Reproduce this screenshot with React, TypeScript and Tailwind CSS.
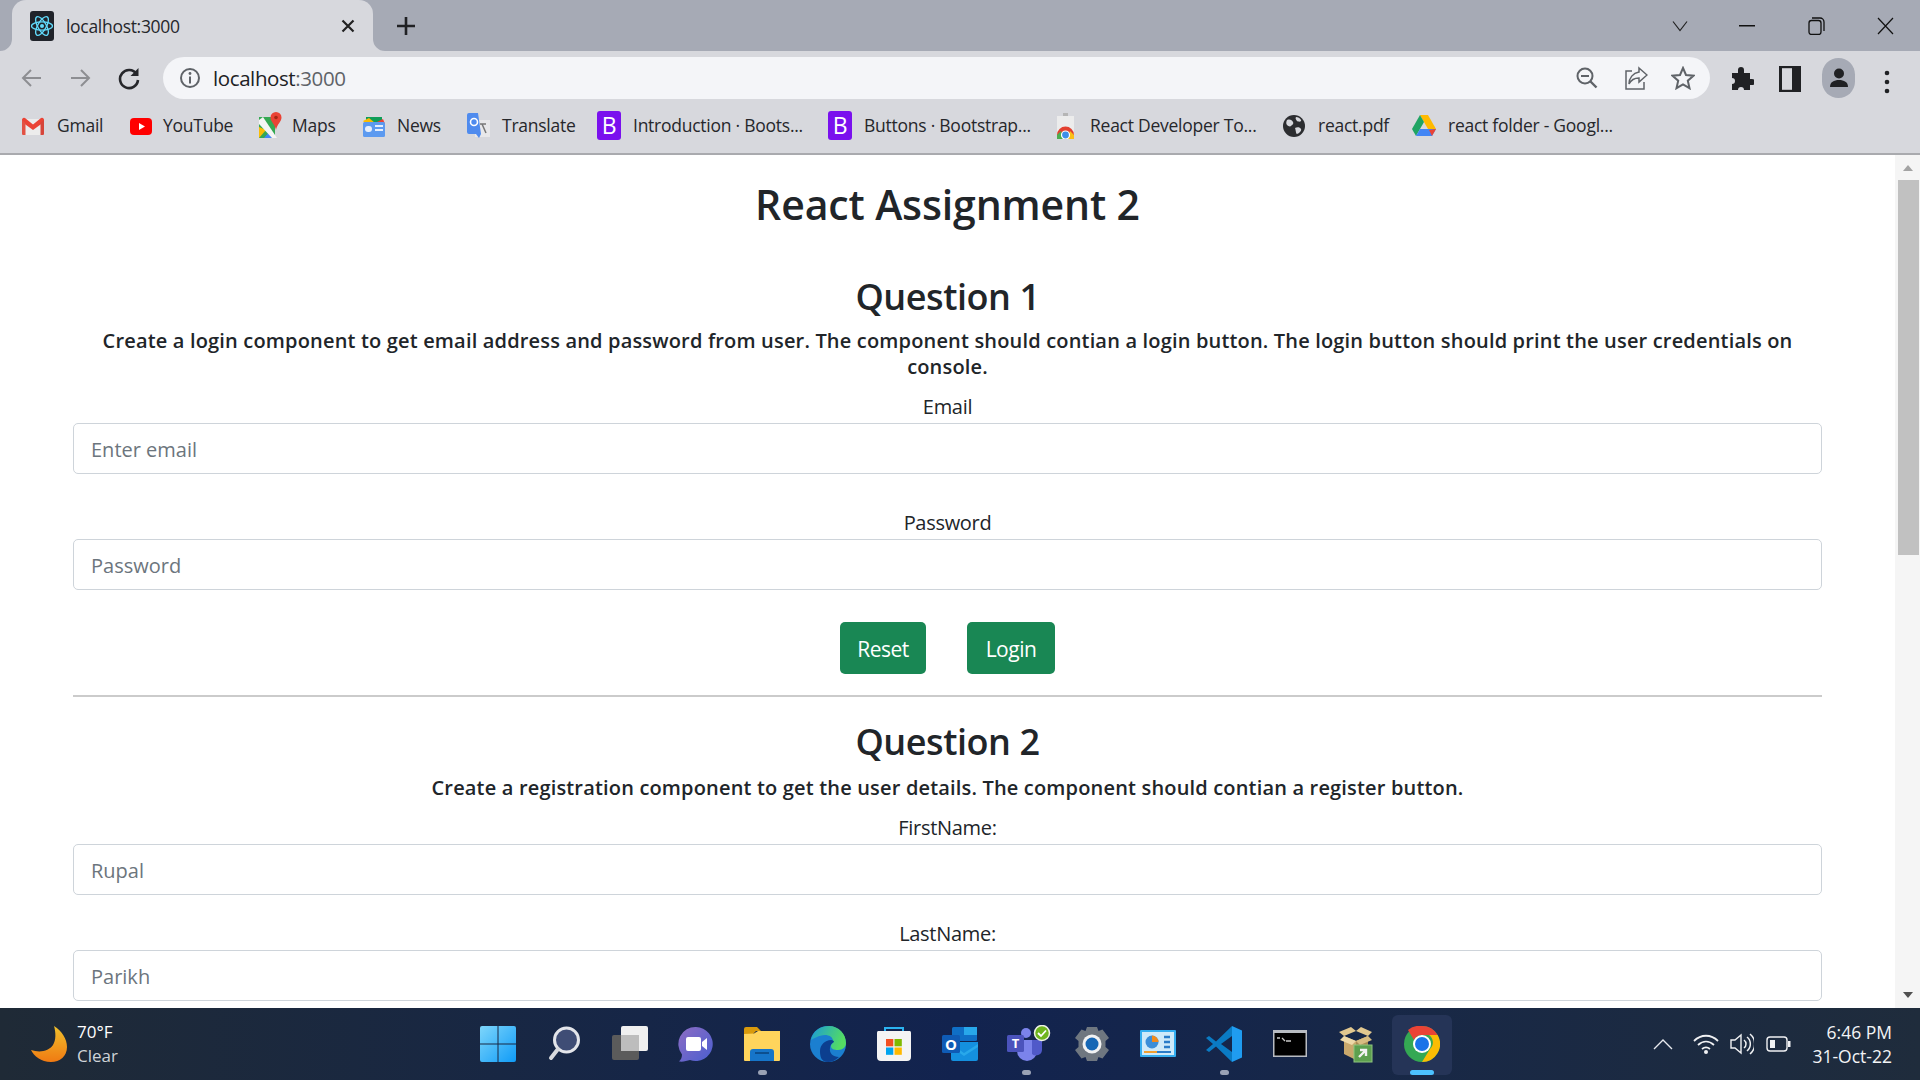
import React from "react";

const FONT = "font-['Open_Sans','Noto_Sans',sans-serif]";

function ReactIcon() {
  return (
    <svg width="24" height="30" viewBox="0 0 24 30">
      <rect width="24" height="30" rx="3" fill="#20232a" y="0" />
      <g fill="none" stroke="#61dafb" strokeWidth="1.3">
        <ellipse cx="12" cy="15" rx="10.5" ry="4.2" />
        <ellipse cx="12" cy="15" rx="10.5" ry="4.2" transform="rotate(60 12 15)" />
        <ellipse cx="12" cy="15" rx="10.5" ry="4.2" transform="rotate(120 12 15)" />
      </g>
      <circle cx="12" cy="15" r="2" fill="#61dafb" />
    </svg>
  );
}

function Gmail() {
  return (
    <svg width="24" height="24" viewBox="0 0 24 24">
      <path d="M1 5h22v15a1 1 0 0 1-1 1H2a1 1 0 0 1-1-1z" fill="#ececec" />
      <path d="M1 5.500A2 2 0 0 1 4 4l8 6.500L20 4a2 2 0 0 1 3 1.500V8l-11 8L1 8z" fill="#ea4335" />
      <path d="M1 6v14a1 1 0 0 0 1 1h2.500V9z" fill="#e25244" />
      <path d="M23 6v14a1 1 0 0 1-1 1h-2.500V9z" fill="#d6453a" />
    </svg>
  );
}

function YouTube() {
  return (
    <svg width="24" height="24" viewBox="0 0 24 24">
      <rect x="1" y="4" width="22" height="17" rx="4" fill="#f00" />
      <path d="M10 9l6 3.500-6 3.500z" fill="#fff" />
    </svg>
  );
}

function Maps() {
  return (
    <svg width="24" height="28" viewBox="0 0 24 28">
      <path d="M1 5h16v21H1z" fill="#35a853" />
      <path d="M1 15l7 3-7 8z" fill="#fbbc04" />
      <path d="M6 26l6-7 6 7z" fill="#4285f4" />
      <path d="M1 8l4-3 14 21h-5L1 12z" fill="#f5f5f5" />
      <path d="M18 0a5.500 5.500 0 0 1 5.500 5.500C23.500 10 19 12 18 18c-1-6-5.500-8-5.500-12.500A5.500 5.500 0 0 1 18 0z" fill="#ea4335" />
      <circle cx="18" cy="5.500" r="1.800" fill="#a52714" />
    </svg>
  );
}

function News() {
  return (
    <svg width="24" height="24" viewBox="0 0 24 24">
      <path d="M4 3h16v6H4z" fill="#0f9d58" />
      <path d="M1 7l6-3 6 5H3z" fill="#fbbc04" />
      <path d="M13 9l8-4 2 5z" fill="#ea4335" />
      <rect x="1" y="8" width="22" height="15" rx="1.500" fill="#5c9af0" />
      <rect x="3" y="12" width="7" height="6" rx="3" fill="#e6effc" />
      <rect x="13" y="11" width="8" height="2" fill="#e6effc" />
      <rect x="13" y="15" width="8" height="2" fill="#e6effc" />
    </svg>
  );
}

function Translate() {
  return (
    <svg width="24" height="28" viewBox="0 0 24 28">
      <rect x="8" y="8" width="15" height="17" fill="#e8e8ea" />
      <path d="M15 12l4 9M19 12h-6" stroke="#777" strokeWidth="1.500" fill="none" />
      <path d="M2 1h9l3 21 -2 4-3-4H2a2 2 0 0 1-2-2V3a2 2 0 0 1 2-2z" fill="#4f8bee" />
      <circle cx="7" cy="10" r="3.500" fill="none" stroke="#fff" strokeWidth="1.600" />
    </svg>
  );
}

function Boot() {
  return (
    <div className="w-6 h-[29px] bg-[#7a10ee] rounded-[3px] text-white text-[23px] leading-[29px] text-center font-medium">
      B
    </div>
  );
}

function Devtools() {
  return (
    <svg width="19" height="26" viewBox="0 0 19 26">
      <rect x="7" y="0" width="5" height="3" fill="#b5b5b5" />
      <rect x="1" y="3" width="17" height="20" fill="#ececec" />
      <path d="M1 22a8.500 8.500 0 0 1 17 0z" fill="#e3402f" />
      <path d="M1 22v4h7l-3-8z" fill="#4cae50" />
      <path d="M18 22v4h-7l3-8z" fill="#fbc016" />
      <circle cx="9.500" cy="22" r="4" fill="#3d8fe9" stroke="#fff" strokeWidth="1.200" />
    </svg>
  );
}

function Globe() {
  return (
    <svg width="22" height="22" viewBox="0 0 22 22">
      <circle cx="11" cy="11" r="11" fill="#2c2d30" />
      <path d="M4 5c3-1 5 0 6 2s-1 3-2 4-3 0-4-1-1-3 0-5zM12 13c2-1 5-1 6 1s-3 5-4 5-1-3-2-6zM13 2c2 0 4 1 5 3s-3 2-4 1-2-3-1-4z" fill="#d7d8dd" />
    </svg>
  );
}

function Drive() {
  return (
    <svg width="24" height="24" viewBox="0 0 24 24">
      <path d="M8 1h8l8 14h-8z" fill="#ffba00" />
      <path d="M8 1L0 15l4 7 8-14z" fill="#1fa463" />
      <path d="M8 15h16l-4 7H4z" fill="#4285f4" />
      <path d="M24 15l-4 7-3-6z" fill="#ea4335" />
    </svg>
  );
}

const bookmarks = [
  { icon: <Gmail />, t: "Gmail", w: "w-[46px]", ml: "ml-[21px]", iw: "w-6", g: "mr-3" },
  { icon: <YouTube />, t: "YouTube", w: "w-[69px]", ml: "ml-[26px]", iw: "w-6", g: "mr-[10px]" },
  { icon: <Maps />, t: "Maps", w: "w-[44px]", ml: "ml-[26px]", iw: "w-6", g: "mr-[10px]" },
  { icon: <News />, t: "News", w: "w-[44px]", ml: "ml-[26px]", iw: "w-6", g: "mr-[11px]" },
  { icon: <Translate />, t: "Translate", w: "w-[71px]", ml: "ml-[26px]", iw: "w-6", g: "mr-[11px]" },
  { icon: <Boot />, t: "Introduction · Boots...", w: "w-[170px]", ml: "ml-[24px]", iw: "w-6", g: "mr-3" },
  { icon: <Boot />, t: "Buttons · Bootstrap...", w: "w-[166px]", ml: "ml-[25px]", iw: "w-6", g: "mr-3" },
  { icon: <Devtools />, t: "React Developer To...", w: "w-[166px]", ml: "ml-[26px]", iw: "w-[19px]", g: "mr-[15px]" },
  { icon: <Globe />, t: "react.pdf", w: "w-[70px]", ml: "ml-[27px]", iw: "w-[22px]", g: "mr-[13px]" },
  { icon: <Drive />, t: "react folder - Googl...", w: "w-[170px]", ml: "ml-[24px]", iw: "w-6", g: "mr-3" },
];

function TopBar() {
  return (
    <div className={`${FONT} shrink-0`}>
      <div className="h-[62px] bg-[#a6aab5] flex relative">
        <div className="ml-3 mt-0 w-[361px] h-[62px] bg-[#d7d8dd] rounded-t-[14px] flex items-start pl-[18px] pt-[11px]">
          <ReactIcon />
          <span className="ml-[12px] text-[17.500px] leading-[30px] tracking-[-0.3px] text-[#26272b]">localhost:3000</span>
          <svg className="ml-[161px] mt-[8px]" width="14" height="14" viewBox="0 0 14 14">
            <path d="M1.500 1.500l11 11M12.500 1.500l-11 11" stroke="#222" strokeWidth="2.200" />
          </svg>
        </div>
        <svg className="absolute left-0 top-[39px]" width="12" height="12" viewBox="0 0 12 12">
          <path d="M12 0v12H0a12 12 0 0 0 12-12z" fill="#d7d8dd" />
        </svg>
        <svg className="absolute left-[373px] top-[39px]" width="12" height="12" viewBox="0 0 12 12">
          <path d="M0 0v12h12A12 12 0 0 1 0 0z" fill="#d7d8dd" />
        </svg>
        <svg className="ml-[23px] mt-[16px]" width="20" height="20" viewBox="0 0 20 20">
          <path d="M10 1v18M1 10h18" stroke="#202124" strokeWidth="2.600" />
        </svg>
        <div className="absolute right-0 top-0 h-[51px] flex items-start">
          <svg className="mt-[20px] mr-[50px]" width="18" height="12" viewBox="0 0 18 12">
            <path d="M2 1.500l7 9 7-9" stroke="#222" strokeWidth="1.200" fill="none" />
          </svg>
          <svg className="mt-[25px] mr-[53px]" width="16" height="2" viewBox="0 0 16 2">
            <rect width="16" height="1.500" fill="#111" />
          </svg>
          <svg className="mt-[17px] mr-[52px]" width="17" height="18" viewBox="0 0 17 18">
            <rect x="1" y="3.500" width="12" height="14" rx="2.500" fill="none" stroke="#111" strokeWidth="1.300" />
            <path d="M4 1h8a4 4 0 0 1 4 4v9" fill="none" stroke="#111" strokeWidth="1.300" />
          </svg>
          <svg className="mt-[17px] mr-[26px]" width="17" height="18" viewBox="0 0 17 18">
            <path d="M1 1l15 16M16 1L1 17" stroke="#111" strokeWidth="1.200" />
          </svg>
        </div>
      </div>
      <div className="h-[104px] -mt-[11px] relative bg-[#d7d8dd] border-b-2 border-[#a9aaae]">
        <div className="h-[49px] flex items-start pt-[6px]">
          <svg className="ml-[21px] mt-[10px]" width="22" height="22" viewBox="0 0 22 22">
            <path d="M20 11H3M10 3l-8 8 8 8" stroke="#8d8e92" strokeWidth="2" fill="none" />
          </svg>
          <svg className="ml-[26px] mt-[10px]" width="22" height="22" viewBox="0 0 22 22">
            <path d="M2 11h17M12 3l8 8-8 8" stroke="#8d8e92" strokeWidth="2" fill="none" />
          </svg>
          <svg className="ml-[26px] mt-[9px]" width="24" height="24" viewBox="0 0 24 24">
            <path d="M19.500 8A9 9 0 1 0 21 14" stroke="#26272b" strokeWidth="2.600" fill="none" />
            <path d="M21.500 2v8h-8z" fill="#26272b" />
          </svg>
          <div className="ml-[22px] w-[1547px] h-[42px] bg-[#f4f5f8] rounded-full flex items-center">
            <svg className="ml-[16px]" width="22" height="22" viewBox="0 0 22 22">
              <circle cx="11" cy="11" r="9" stroke="#5f6368" strokeWidth="2" fill="none" />
              <circle cx="11" cy="6.500" r="1.400" fill="#5f6368" />
              <rect x="10" y="9.500" width="2" height="7" fill="#5f6368" />
            </svg>
            <span className="ml-[12px] text-[20.500px] tracking-[-0.4px] text-[#202124]">
              localhost<span className="text-[#5f6368]">:3000</span>
            </span>
            <div className="ml-auto flex items-center">
              <svg width="22" height="24" viewBox="0 0 22 24">
                <circle cx="9" cy="10" r="7.500" stroke="#5f6368" strokeWidth="2" fill="none" />
                <path d="M14.500 15.500l6 6" stroke="#5f6368" strokeWidth="2.400" />
                <path d="M5 10h8" stroke="#5f6368" strokeWidth="2" />
              </svg>
              <svg className="ml-[26px]" width="24" height="24" viewBox="0 0 24 24">
                <path d="M8 5H2v18h18v-7" stroke="#5f6368" strokeWidth="1.500" fill="none" />
                <path d="M15 2l8 7-8 7v-4c-5 0-8 2-10 6 0-6 4-11 10-12z" stroke="#5f6368" strokeWidth="1.500" fill="#f4f5f8" />
              </svg>
              <svg className="ml-[23px] mr-[15px]" width="24" height="24" viewBox="0 0 24 24">
                <path d="M12 2l3 7 7.500.700-5.700 5 1.700 7.500L12 18.300l-6.500 3.900 1.700-7.500-5.700-5L9 9z" stroke="#5f6368" strokeWidth="2" fill="none" />
              </svg>
            </div>
          </div>
          <svg className="ml-[20px] mt-[8px]" width="24" height="26" viewBox="0 0 24 26">
            <path d="M2 8h6V5a3 3 0 0 1 6 0v3h6v6h2a3 3 0 0 1 0 6h-2v5h-6a3 3 0 0 0-6 0H2v-6a3 3 0 0 0 0-6z" fill="#202124" />
          </svg>
          <svg className="ml-[25px] mt-[9px]" width="22" height="26" viewBox="0 0 22 26">
            <rect x="1" y="1" width="20" height="24" fill="none" stroke="#202124" strokeWidth="2.400" />
            <rect x="13" y="1" width="8" height="24" fill="#202124" />
            <rect x="1" y="1" width="2" height="24" fill="#202124" />
          </svg>
          <div className="ml-[21px] mt-[1px] w-[33px] h-[40px] rounded-full bg-[#a6aab5] flex items-center justify-center">
            <svg width="22" height="22" viewBox="0 0 22 22">
              <circle cx="11" cy="6.500" r="5" fill="#202124" />
              <path d="M2 20c0-5 4-7 9-7s9 2 9 7z" fill="#202124" />
            </svg>
          </div>
          <svg className="ml-[29px] mt-[13px]" width="6" height="24" viewBox="0 0 6 24">
            <circle cx="3" cy="3" r="2.300" fill="#202124" />
            <circle cx="3" cy="12" r="2.300" fill="#202124" />
            <circle cx="3" cy="21" r="2.300" fill="#202124" />
          </svg>
        </div>
        <div className="h-[51px] flex items-center text-[17.500px] tracking-[-0.25px] text-[#26272b] whitespace-nowrap">
          {bookmarks.map((b) => (
            <div key={b.t} className={`flex items-center ${b.ml}`}>
              <div className={`${b.iw} ${b.g} flex justify-center shrink-0`}>{b.icon}</div>
              <span className={b.w}>{b.t}</span>
            </div>
          ))}
        </div>
      </div>
    </div>
  );
}

function Field({ label, ph, im }: { label: string; ph: string; im: string }) {
  return (
    <div className={im}>
      <label className="block mb-[1px] text-center text-[20px] leading-[30px] tracking-[-0.3px]">{label}</label>
      <input
        placeholder={ph}
        className="block w-full h-[51px] px-[17px] pt-[1px] border border-[#ced4da] rounded-[5px] text-[20px] bg-white placeholder:text-[#6c757d] outline-none"
      />
    </div>
  );
}

function Page() {
  return (
    <div className={`${FONT} flex-1 min-h-0 flex overflow-hidden bg-white text-[#212529]`}>
      <div className="flex-1 min-w-0 px-[73px] pt-[24px]">
        <h1 className="text-center text-[41px] leading-[50px] font-semibold tracking-[-0.13px]">React Assignment 2</h1>
        <h2 className="mt-[46px] text-center text-[36px] leading-[44px] font-semibold tracking-[-0.45px]">Question 1</h2>
        <p className="mt-[9px] text-center text-[20px] leading-[26px] font-semibold tracking-[0.17px] px-[10px]">
          Create a login component to get email address and password from user. The component should contian a login button. The login button should print the user credentials on console.
        </p>
        <Field label="Email" ph="Enter email" im="mt-[12px]" />
        <Field label="Password" ph="Password" im="mt-[34px]" />
        <div className="mt-[32px] flex justify-center gap-[41px]">
          <button className="w-[86px] h-[52px] pt-[3px] bg-[#198754] text-white text-[21px] tracking-[-0.5px] rounded-[5px]">Reset</button>
          <button className="w-[88px] h-[52px] pt-[3px] bg-[#198754] text-white text-[21px] tracking-[-0.5px] rounded-[5px]">Login</button>
        </div>
        <div className="mt-[21px] h-[2px] bg-[#cbcbcb]" />
        <h2 className="mt-[23px] text-center text-[36px] leading-[44px] font-semibold tracking-[-0.45px]">Question 2</h2>
        <p className="mt-[11px] text-center text-[20px] leading-[26px] font-semibold tracking-[0.17px]">
          Create a registration component to get the user details. The component should contian a register button.
        </p>
        <Field label="FirstName:" ph="Rupal" im="mt-[12px]" />
        <Field label="LastName:" ph="Parikh" im="mt-[24px]" />
      </div>
      <div className="w-[25px] shrink-0 bg-[#f5f5f5] flex flex-col items-center">
        <svg className="mt-[9px]" width="12" height="8" viewBox="0 0 12 8"><path d="M6 1l5 6H1z" fill="#a3a3a3" /></svg>
        <div className="mt-[8px] ml-[1px] w-[21px] h-[375px] bg-[#c1c1c1]" />
        <svg className="mt-auto mb-[9px]" width="12" height="8" viewBox="0 0 12 8"><path d="M6 7l5-6H1z" fill="#505050" /></svg>
      </div>
    </div>
  );
}

const Start = () => (
  <svg width="36" height="36" viewBox="0 0 36 36">
    <defs>
      <linearGradient id="st" x1="0" y1="0" x2="1" y2="1">
        <stop offset="0" stopColor="#7ed6fb" />
        <stop offset="1" stopColor="#0f9bf7" />
      </linearGradient>
    </defs>
    <path d="M2 0h15.500v17.500H0V2a2 2 0 0 1 2-2zM18.500 0H34a2 2 0 0 1 2 2v15.500H18.500zM0 18.500h17.500V36H2a2 2 0 0 1-2-2zM18.500 18.500H36V34a2 2 0 0 1-2 2H18.500z" fill="url(#st)" />
  </svg>
);
const Search = () => (
  <svg width="36" height="36" viewBox="0 0 36 36">
    <circle cx="20.500" cy="14" r="12" fill="#3f4d75" stroke="#e3e5ea" strokeWidth="3" />
    <path d="M12 23l-7 9" stroke="#d8dade" strokeWidth="4" strokeLinecap="round" />
  </svg>
);
const TaskView = () => (
  <svg width="36" height="36" viewBox="0 0 36 36">
    <rect x="0" y="9" width="27" height="25" rx="2" fill="#5b5b5b" />
    <rect x="9" y="0" width="27" height="25" rx="2" fill="#f0f0f0" />
    <rect x="9" y="9" width="18" height="16" fill="#bdbdbd" />
  </svg>
);
const Chat = () => (
  <svg width="36" height="36" viewBox="0 0 36 36">
    <defs>
      <linearGradient id="ch" x1="0" y1="0" x2="1" y2="1">
        <stop offset="0" stopColor="#8d6cc4" />
        <stop offset="1" stopColor="#4a5fd0" />
      </linearGradient>
    </defs>
    <path d="M18 1a17 17 0 1 1-6 33c-3 1-7 2-11 1.500 2-2 3-4 3-7A17 17 0 0 1 18 1z" fill="url(#ch)" />
    <rect x="8" y="11" width="15" height="14" rx="2" fill="#fff" />
    <path d="M24 16l5-4v12l-5-4z" fill="#fff" />
  </svg>
);
const Explorer = () => (
  <svg width="36" height="36" viewBox="0 0 36 36">
    <path d="M0 3a2 2 0 0 1 2-2h11l4 4h-5l-3 3H0z" fill="#d99a0c" />
    <path d="M0 8l10-.5L14 5h22v29a1 1 0 0 1-1 1H1a1 1 0 0 1-1-1z" fill="#ffd45c" />
    <path d="M6 35V26a3 3 0 0 1 3-3h18a3 3 0 0 1 3 3v9z" fill="#1675c9" />
    <rect x="11" y="26" width="14" height="2" fill="#0c4f8f" />
  </svg>
);
const Edge = () => (
  <svg width="36" height="36" viewBox="0 0 36 36">
    <defs>
      <linearGradient id="ed" x1="0" y1="0" x2="1" y2="0.300">
        <stop offset="0" stopColor="#1a9ad8" />
        <stop offset="1" stopColor="#54dd62" />
      </linearGradient>
    </defs>
    <circle cx="18" cy="18" r="18" fill="#1b7fd0" />
    <path d="M1 14C3 5 10 0 19 0c10 0 17 8 17 17 0 4-3 7-8 7-4 0-7-1-7-4 0-2 2-2 2-5 0-4-4-6-8-6-6 0-12 4-14 5z" fill="url(#ed)" />
    <path d="M20 22c-1 5 3 9 9 9-3 3-7 5-11 5-7 0-8-6-8-11 0-6 5-11 11-11 2 0 3 1 3 2-2 1-4 3-4 6z" fill="#0c3f8f" />
  </svg>
);
const Store = () => (
  <svg width="36" height="36" viewBox="0 0 36 36">
    <path d="M9 5V2h18v3" stroke="#2bb3f0" strokeWidth="2" fill="none" />
    <path d="M2 5h32a2 2 0 0 1 1 2v24a4 4 0 0 1-4 4H5a4 4 0 0 1-4-4V7a2 2 0 0 1 1-2z" fill="#f4f4f4" />
    <rect x="10" y="13" width="7.300" height="7.300" fill="#f25022" />
    <rect x="18.500" y="13" width="7.300" height="7.300" fill="#7fba00" />
    <rect x="10" y="21.500" width="7.300" height="7.300" fill="#00a4ef" />
    <rect x="18.500" y="21.500" width="7.300" height="7.300" fill="#ffb900" />
  </svg>
);
const Outlook = () => (
  <svg width="36" height="36" viewBox="0 0 36 36">
    <rect x="10" y="1" width="25" height="14" rx="1.500" fill="#0f6fc6" />
    <rect x="22" y="1" width="13" height="8" fill="#28a8ea" />
    <path d="M9 16h27v17a2 2 0 0 1-2 2H11a2 2 0 0 1-2-2z" fill="#1490df" />
    <path d="M9 18l13 9 14-9v3l-14 9-13-9z" fill="#28a8ea" />
    <rect x="0" y="9" width="18" height="18" rx="1.500" fill="#0f5bb5" />
    <text x="9" y="23.500" textAnchor="middle" fontSize="15" fontWeight="700" fill="#fff" fontFamily="Open Sans, sans-serif">O</text>
  </svg>
);
const Teams = () => (
  <svg className="ml-[5px]" width="44" height="38" viewBox="0 0 44 38">
    <circle cx="19" cy="8" r="5" fill="#7b83eb" />
    <path d="M10 15h20v11a10 10 0 0 1-20 0z" fill="#7b83eb" />
    <path d="M25 15h10v10a6 6 0 0 1-10 4z" fill="#5059c9" />
    <rect x="0" y="10" width="17" height="17" rx="1.500" fill="#4b53bc" />
    <text x="8.500" y="23" textAnchor="middle" fontSize="13" fontWeight="700" fill="#fff" fontFamily="Open Sans, sans-serif">T</text>
    <circle cx="35" cy="8" r="7.500" fill="#6fb51f" stroke="#eef2e6" strokeWidth="1.500" />
    <path d="M31 8l3 3 5-5.500" stroke="#fff" strokeWidth="1.800" fill="none" />
  </svg>
);
const Gear = () => (
  <svg width="36" height="36" viewBox="0 0 36 36">
    <path d="M13 1h10l1.500 4 4-1.500L35 12l-3.500 3v6l3.500 3-6.500 8.500-4-1.500L23 35H13l-1.500-4-4 1.500L1 24l3.500-3v-6L1 12l6.500-8.500 4 1.500z" fill="#6f7780" />
    <circle cx="18" cy="18" r="9.500" fill="#f1f2f3" />
    <circle cx="18" cy="18" r="6.500" fill="#1667b5" />
  </svg>
);
const Panel = () => (
  <svg width="36" height="28" viewBox="0 0 36 28">
    <rect width="36" height="27" rx="1" fill="#35aef0" />
    <rect x="2" y="2" width="32" height="23" fill="#cfeaf9" />
    <circle cx="12" cy="12" r="6.500" fill="#3b8ed8" />
    <path d="M12 5.500V12h6.500A6.500 6.500 0 0 0 12 5.500z" fill="#f08a1c" />
    <path d="M24 7h6M24 12h6M24 17h6" stroke="#2a7cc8" strokeWidth="2.500" />
    <path d="M4 22h13" stroke="#f0a030" strokeWidth="2" />
    <path d="M17 22h14" stroke="#2a7cc8" strokeWidth="2" />
  </svg>
);
const VSCode = () => (
  <svg width="36" height="36" viewBox="0 0 36 36">
    <path d="M26 0l10 4.500v27L26 36z" fill="#1f9cf0" />
    <path d="M26 0L10 15.500 3 10 0 12l7 6-7 6 3 2 7-5.500L26 36V26L15 18l11-8z" fill="#0a7bc4" />
  </svg>
);
const Cmd = () => (
  <svg width="34" height="28" viewBox="0 0 34 28">
    <rect width="34" height="27" fill="#b8bcc2" />
    <rect x="1.500" y="3" width="31" height="22.500" fill="#000" />
    <path d="M4 8h3M9 8l3 3M13 11h5" stroke="#c9c9c9" strokeWidth="1.300" fill="none" />
  </svg>
);
const Box = () => (
  <svg width="34" height="37" viewBox="0 0 34 37">
    <path d="M5 10l12 5 12-5v18l-12 6-12-6z" fill="#c9a86c" />
    <path d="M17 15l12-5v18l-12 6z" fill="#a98a52" />
    <path d="M0 6l12-5 5 4 5-4 11 5-4 4-12-5-12 5z" fill="#e2c88f" />
    <path d="M5 10l12 5-4 4L1 14z" fill="#eed9a8" />
    <path d="M29 10l-12 5 4 4 12-5z" fill="#d8bc82" />
    <rect x="15" y="19" width="18" height="17" fill="#5da04f" stroke="#8fc57f" />
    <path d="M20 31l6-6M21 24h6v6" stroke="#f2f2f2" strokeWidth="2.400" fill="none" />
  </svg>
);
const Chrome = () => (
  <svg width="36" height="36" viewBox="0 0 36 36">
    <circle cx="18" cy="18" r="18" fill="#34a853" />
    <path d="M18 0a18 18 0 0 1 15.600 9H18a9 9 0 0 0-8 5L4 4a18 18 0 0 1 14-4z" fill="#ea4335" />
    <path d="M33.600 9A18 18 0 0 1 18 36l8-13a9 9 0 0 0-1-14z" fill="#fbbc04" />
    <circle cx="18" cy="18" r="9" fill="#fff" />
    <circle cx="18" cy="18" r="7" fill="#1a73e8" />
  </svg>
);

const taskbarItems: { el: React.ReactNode; dot?: string }[] = [
  { el: <Start /> },
  { el: <Search /> },
  { el: <TaskView /> },
  { el: <Chat /> },
  { el: <Explorer />, dot: "w-[9px] bg-[#9aa2b5]" },
  { el: <Edge /> },
  { el: <Store /> },
  { el: <Outlook /> },
  { el: <Teams />, dot: "w-[9px] bg-[#9aa2b5]" },
  { el: <Gear /> },
  { el: <Panel /> },
  { el: <VSCode />, dot: "w-[9px] bg-[#9aa2b5]" },
  { el: <Cmd /> },
  { el: <Box /> },
  { el: <Chrome />, dot: "w-[24px] bg-[#4cc2ff]" },
];

function Taskbar() {
  return (
    <div className={`${FONT} shrink-0 h-[72px] bg-gradient-to-r from-[#1f2a36] via-[#12234f] to-[#1f2c3c] flex items-stretch text-white`}>
      <div className="w-[465px] shrink-0 flex items-center">
        <svg className="ml-[31px]" width="36" height="36" viewBox="0 0 36 36">
          <defs>
            <linearGradient id="mo" x1="0" y1="0" x2="0" y2="1">
              <stop offset="0" stopColor="#f0c02c" />
              <stop offset="1" stopColor="#f07a12" />
            </linearGradient>
          </defs>
          <path d="M23 0c8 5 13 13 13 21 0 9-7 15-16 15C10 36 3 30 0 24c9 3 18 1 22-5 3-5 3-12 1-19z" fill="url(#mo)" />
        </svg>
        <div className="ml-[10px] text-[17px] leading-[24px]">
          <div className="text-white">70°F</div>
          <div className="text-[#cfd3d8]">Clear</div>
        </div>
      </div>
      <div className="flex items-stretch">
        {taskbarItems.map((it, i) => (
          <div key={i} className="w-[66px] h-full flex items-center justify-center relative">
            {i === 14 && <div className="absolute left-[3px] top-[7px] w-[60px] h-[60px] rounded-[6px] bg-[#253457]" />}
            <div className="relative flex items-center justify-center">{it.el}</div>
            {it.dot && <div className={`absolute bottom-[5px] h-[5px] rounded-full ${it.dot}`} />}
          </div>
        ))}
      </div>
      <div className="flex-1 flex items-center justify-end">
        <svg width="20" height="12" viewBox="0 0 20 12">
          <path d="M1 11l9-9 9 9" stroke="#e8eaee" strokeWidth="1.400" fill="none" />
        </svg>
        <svg className="ml-[20px]" width="26" height="20" viewBox="0 0 26 20">
          <path d="M1 7c7-7 17-7 24 0M5 11c5-4.500 11-4.500 16 0M9 15c2.500-2 5.500-2 8 0" stroke="#f0f1f3" strokeWidth="1.800" fill="none" />
          <circle cx="13" cy="18" r="2" fill="#f0f1f3" />
        </svg>
        <svg className="ml-[11px]" width="24" height="22" viewBox="0 0 24 22">
          <path d="M1 7h4l6-5v18l-6-5H1z" stroke="#f0f1f3" strokeWidth="1.400" fill="none" />
          <path d="M14 7a5 5 0 0 1 0 8M17 4a9 9 0 0 1 0 14M20 1a13 13 0 0 1 0 20" stroke="#f0f1f3" strokeWidth="1.500" fill="none" />
        </svg>
        <svg className="ml-[12px]" width="25" height="16" viewBox="0 0 25 16">
          <rect x="1" y="1" width="20" height="14" rx="3" stroke="#f0f1f3" strokeWidth="1.400" fill="none" />
          <rect x="4" y="4" width="5" height="8" fill="#f0f1f3" />
          <rect x="22" y="5" width="2.500" height="6" fill="#f0f1f3" />
        </svg>
        <div className="ml-[21px] mr-[28px] text-right text-[17.500px] leading-[24px] text-[#f3f4f6] whitespace-nowrap">
          <div>6:46 PM</div>
          <div>31-Oct-22</div>
        </div>
      </div>
    </div>
  );
}

export default function App() {
  return (
    <div className="w-[1920px] h-[1080px] flex flex-col overflow-hidden">
      <TopBar />
      <Page />
      <Taskbar />
    </div>
  );
}
